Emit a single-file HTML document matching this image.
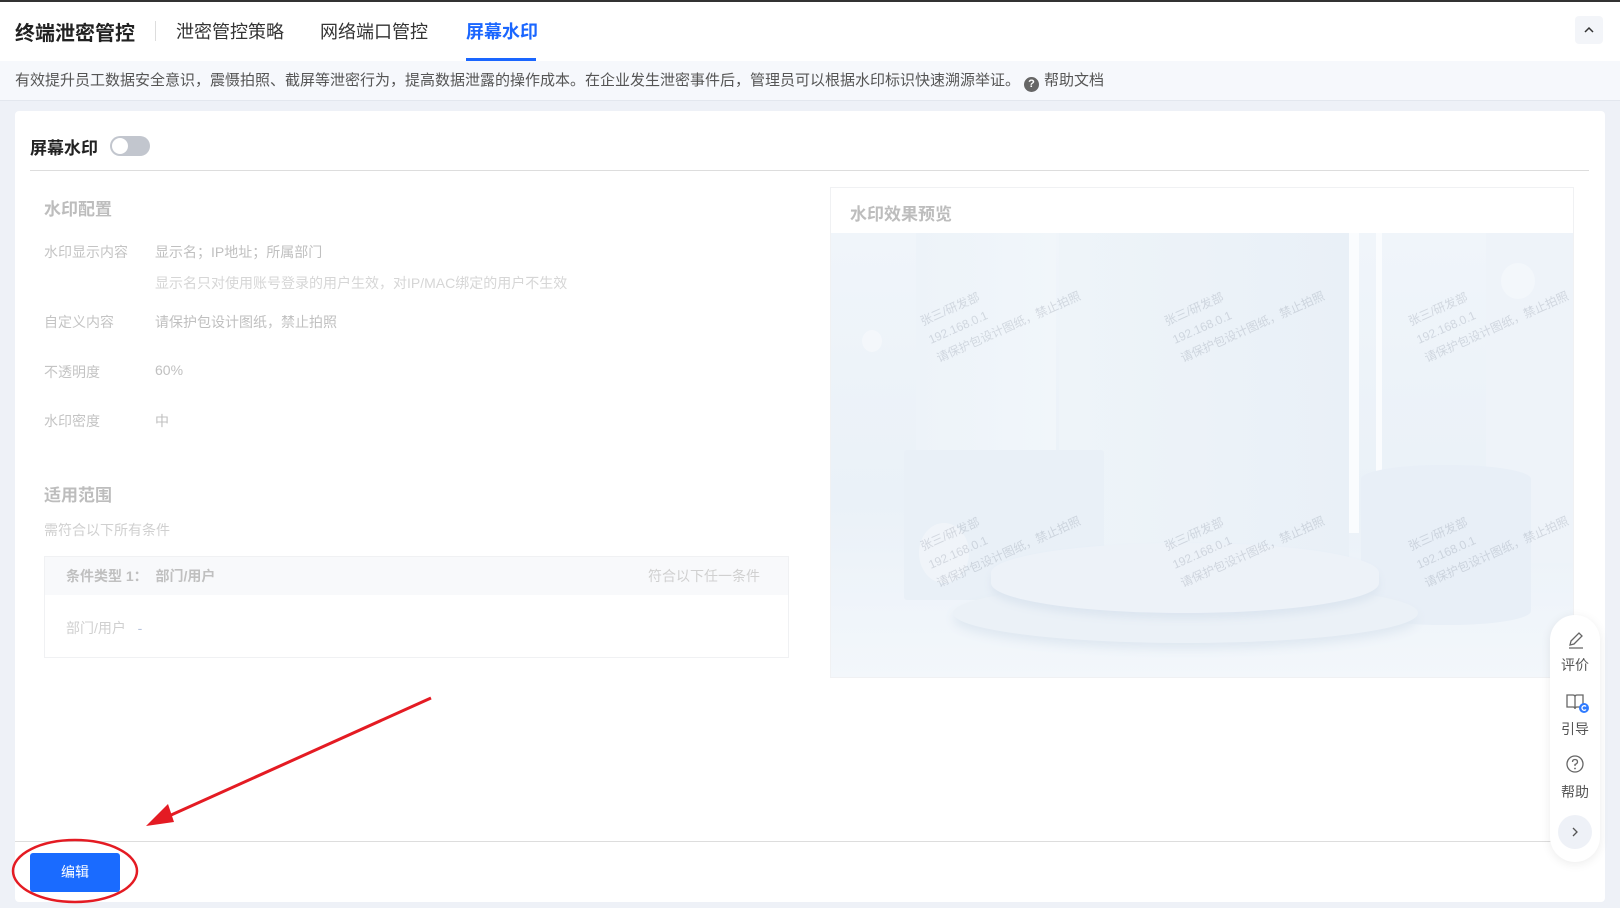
<!DOCTYPE html>
<html><head><meta charset="utf-8"><style>
*{margin:0;padding:0;box-sizing:border-box}
body{width:1620px;height:908px;overflow:hidden;background:#eef1f7;font-family:"Liberation Sans","Noto Sans CJK SC",sans-serif;position:relative;color:#333}
.abs{position:absolute}
.top{left:0;top:0;width:1620px;height:61px;background:#fff;border-top:2px solid #333}
.tab{top:18px;font-size:18px;color:#333;white-space:nowrap}
.info{left:0;top:61px;width:1620px;height:40px;background:#f6f8fc;border-bottom:1px solid #e3e7ee;font-size:15px;color:#555;line-height:40px;padding-left:15px;white-space:nowrap}
.card{left:15px;top:111px;width:1590px;height:791px;background:#fff;border-radius:4px}
.lab{font-size:14px;color:#c4c4c4;white-space:nowrap}
.val{font-size:14px;color:#c0c0c0;white-space:nowrap}
.h{font-size:17px;font-weight:bold;color:#bdbdbd}
.wm{font-size:12px;color:rgba(90,100,120,.2);line-height:20px;transform:rotate(-24deg);transform-origin:left top;white-space:nowrap}
.side{font-size:14px;color:#555;text-align:center;width:50px}
</style></head><body>
<div class="abs top"></div>
<div class="abs tab" style="left:15px;font-weight:bold;font-size:20px;top:17px;color:#222">终端泄密管控</div>
<div class="abs" style="left:155px;top:21px;width:1px;height:20px;background:#ddd"></div>
<div class="abs tab" style="left:176px">泄密管控策略</div>
<div class="abs tab" style="left:320px">网络端口管控</div>
<div class="abs tab" style="left:466px;color:#1a66ff;font-weight:bold">屏幕水印</div>
<div class="abs" style="left:466px;top:58px;width:70px;height:3px;background:#1a66ff"></div>
<div class="abs" style="left:1575px;top:16px;width:28px;height:28px;background:#f3f5f9;border-radius:4px"></div>
<svg class="abs" style="left:1583px;top:24px" width="12" height="12" viewBox="0 0 12 12"><path d="M2 8 L6 4 L10 8" stroke="#333" stroke-width="1.5" fill="none"/></svg>
<div class="abs info">有效提升员工数据安全意识，震慑拍照、截屏等泄密行为，提高数据泄露的操作成本。在企业发生泄密事件后，管理员可以根据水印标识快速溯源举证。<span style="display:inline-block;width:15px;height:15px;border-radius:50%;background:#666;color:#fff;font-size:11px;line-height:15px;text-align:center;font-weight:bold;vertical-align:-2px;margin:0 5px 0 4px">?</span>帮助文档</div>
<div class="abs card"></div>
<div class="abs" style="left:30px;top:134px;font-size:17px;font-weight:bold;color:#222">屏幕水印</div>
<div class="abs" style="left:110px;top:136px;width:40px;height:20px;border-radius:10px;background:#c2c6ce"></div>
<div class="abs" style="left:112px;top:138px;width:16px;height:16px;border-radius:50%;background:#fff"></div>
<div class="abs" style="left:30px;top:170px;width:1559px;height:1px;background:#ddd"></div>
<div class="abs h" style="left:44px;top:195px">水印配置</div>
<div class="abs lab" style="left:44px;top:242px">水印显示内容</div>
<div class="abs val" style="left:155px;top:242px">显示名；IP地址；所属部门</div>
<div class="abs val" style="left:155px;top:273px;color:#d6d6d6">显示名只对使用账号登录的用户生效，对IP/MAC绑定的用户不生效</div>
<div class="abs lab" style="left:44px;top:312px">自定义内容</div>
<div class="abs val" style="left:155px;top:312px">请保护包设计图纸，禁止拍照</div>
<div class="abs lab" style="left:44px;top:362px">不透明度</div>
<div class="abs val" style="left:155px;top:362px">60%</div>
<div class="abs lab" style="left:44px;top:411px">水印密度</div>
<div class="abs val" style="left:155px;top:411px">中</div>
<div class="abs h" style="left:44px;top:481px">适用范围</div>
<div class="abs lab" style="left:44px;top:520px;color:#d0d0d0">需符合以下所有条件</div>
<div class="abs" style="left:44px;top:556px;width:745px;height:102px;border:1px solid #f0f1f3"></div>
<div class="abs" style="left:45px;top:557px;width:743px;height:38px;background:#f8f9fb"></div>
<div class="abs lab" style="left:66px;top:566px;font-weight:bold;color:#c0c0c0">条件类型 1：&nbsp;&nbsp;部门/用户</div>
<div class="abs lab" style="left:648px;top:566px;color:#d0d0d0">符合以下任一条件</div>
<div class="abs lab" style="left:66px;top:618px;color:#d0d0d0">部门/用户 &nbsp;&nbsp;<span style="color:#b8c4dc">-</span></div>
<div class="abs" style="left:830px;top:187px;width:744px;height:491px;border:1px solid #f0f1f3;overflow:hidden">
 <div class="abs h" style="left:19px;top:12px">水印效果预览</div>
 <div class="abs" style="left:0;top:45px;width:744px;height:446px;background:linear-gradient(180deg,#f0f5fa 0%,#eaf1f8 60%,#f3f7fb 100%);overflow:hidden">
  <div class="abs" style="left:85px;top:0;width:140px;height:330px;background:linear-gradient(90deg,#edf3f9,#f1f6fa)"></div>
  <div class="abs" style="left:228px;top:0;width:290px;height:330px;background:linear-gradient(90deg,#eef4f9,#e9f0f7)"></div>
  <div class="abs" style="left:518px;top:0;width:10px;height:300px;background:#fafcfe"></div>
  <div class="abs" style="left:545px;top:0;width:6px;height:300px;background:#fafcfe"></div>
  <div class="abs" style="left:655px;top:0;width:89px;height:330px;background:#eef3f9"></div>
  <div class="abs" style="left:73px;top:217px;width:200px;height:150px;background:#e9f0f7;border-radius:3px"></div>
  <div class="abs" style="left:530px;top:232px;width:170px;height:160px;background:#e8eff7;border-radius:80px/14px"></div>
  <div class="abs" style="left:122px;top:350px;width:465px;height:60px;background:#ebf1f7;border-radius:50%;box-shadow:0 6px 10px #dfe8f1"></div>
  <div class="abs" style="left:160px;top:310px;width:388px;height:70px;background:#edf2f8;border-radius:194px/30px;box-shadow:0 6px 8px #dde6f0"></div>
  <div class="abs" style="left:31px;top:97px;width:20px;height:22px;border-radius:50%;background:#f4f7fb"></div>
  <div class="abs" style="left:670px;top:30px;width:34px;height:36px;border-radius:50%;background:#f3f7fb"></div>
  <div class="abs" style="left:88px;top:290px;width:50px;height:60px;border-radius:50%;background:#f0f4f9"></div>
  <div class="abs wm" style="left:86px;top:80px">张三/研发部<br>192.168.0.1<br>请保护包设计图纸，禁止拍照</div>
  <div class="abs wm" style="left:330px;top:80px">张三/研发部<br>192.168.0.1<br>请保护包设计图纸，禁止拍照</div>
  <div class="abs wm" style="left:574px;top:80px">张三/研发部<br>192.168.0.1<br>请保护包设计图纸，禁止拍照</div>
  <div class="abs wm" style="left:86px;top:305px">张三/研发部<br>192.168.0.1<br>请保护包设计图纸，禁止拍照</div>
  <div class="abs wm" style="left:330px;top:305px">张三/研发部<br>192.168.0.1<br>请保护包设计图纸，禁止拍照</div>
  <div class="abs wm" style="left:574px;top:305px">张三/研发部<br>192.168.0.1<br>请保护包设计图纸，禁止拍照</div>
 </div>
</div>
<div class="abs" style="left:15px;top:841px;width:1540px;height:1px;background:#ddd"></div>
<div class="abs" style="left:30px;top:853px;width:90px;height:39px;background:#1a6bff;border-radius:3px;color:#fff;font-size:14px;text-align:center;line-height:39px">编辑</div>
<svg class="abs" style="left:0;top:660px" width="460" height="248">
<ellipse cx="75" cy="211" rx="62" ry="31" fill="none" stroke="#e41b23" stroke-width="2.5"/>
<line x1="431" y1="38" x2="160" y2="160" stroke="#e41b23" stroke-width="3"/>
<path d="M146 166 L168 144 L174 162 Z" fill="#e41b23"/>
</svg>
<div class="abs" style="left:1550px;top:615px;width:50px;height:247px;background:#fff;border-radius:25px;box-shadow:0 2px 10px rgba(0,0,0,.08)"></div>
<svg class="abs" style="left:1566px;top:630px" width="20" height="20" viewBox="0 0 20 20"><path d="M4 15 L5 11 L13 3 L16 6 L8 14 Z M3 18 H17" stroke="#666" stroke-width="1.3" fill="none"/></svg>
<div class="abs side" style="left:1550px;top:655px">评价</div>
<svg class="abs" style="left:1565px;top:692px" width="24" height="22" viewBox="0 0 24 22"><path d="M2 3 H8 Q10 3 10 5 V17 Q10 15 8 15 H2 Z M18 3 H12 Q10 3 10 5 V17 Q10 15 12 15 H18 Z" stroke="#666" stroke-width="1.3" fill="none"/><circle cx="19" cy="16" r="5" fill="#2f7bff"/><path d="M21 14.5 A2.3 2.3 0 1 0 21 17.5" stroke="#fff" stroke-width="1.3" fill="none"/></svg>
<div class="abs side" style="left:1550px;top:719px">引导</div>
<svg class="abs" style="left:1565px;top:754px" width="20" height="20" viewBox="0 0 20 20"><circle cx="10" cy="10" r="8" stroke="#666" stroke-width="1.3" fill="none"/><path d="M7.5 8 Q7.5 5.5 10 5.5 Q12.5 5.5 12.5 8 Q12.5 9.5 10 10.5 V12" stroke="#666" stroke-width="1.3" fill="none"/><circle cx="10" cy="14.5" r=".9" fill="#666"/></svg>
<div class="abs side" style="left:1550px;top:782px">帮助</div>
<div class="abs" style="left:1558px;top:815px;width:34px;height:34px;border-radius:50%;background:#eef1f7"></div>
<svg class="abs" style="left:1569px;top:826px" width="12" height="12" viewBox="0 0 12 12"><path d="M4 2 L8 6 L4 10" stroke="#555" stroke-width="1.3" fill="none"/></svg>
</body></html>
